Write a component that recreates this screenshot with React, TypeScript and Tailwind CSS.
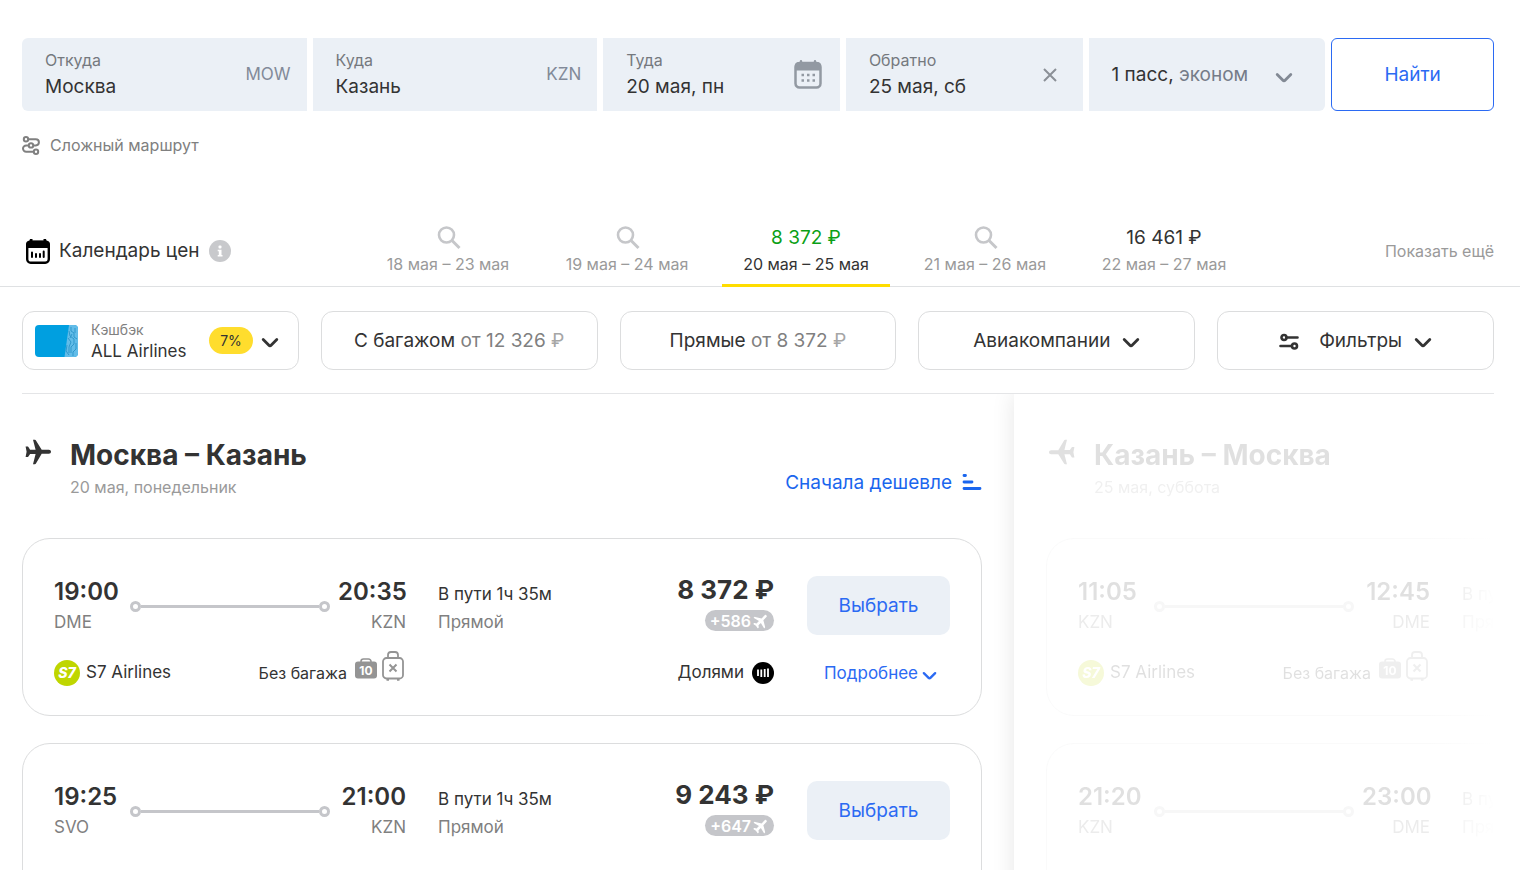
import type { ReactNode } from "react";

type Flight = {
  from: string;
  to: string;
  departure: string;
  arrival: string;
  duration: string;
  price: string;
  miles: string;
  airline?: string;
};

const calendar = [
  { dates: "18 мая – 23 мая" },
  { dates: "19 мая – 24 мая" },
  { dates: "20 мая – 25 мая", price: "8 372 ₽", active: true },
  { dates: "21 мая – 26 мая" },
  { dates: "22 мая – 27 мая", price: "16 461 ₽" },
];

const outbound: Flight[] = [
  {
    from: "DME",
    to: "KZN",
    departure: "19:00",
    arrival: "20:35",
    duration: "1ч 35м",
    price: "8 372 ₽",
    miles: "+586",
    airline: "S7 Airlines",
  },
  {
    from: "SVO",
    to: "KZN",
    departure: "19:25",
    arrival: "21:00",
    duration: "1ч 35м",
    price: "9 243 ₽",
    miles: "+647",
  },
];

const inbound: Flight[] = [
  {
    from: "KZN",
    to: "DME",
    departure: "11:05",
    arrival: "12:45",
    duration: "1ч 40м",
    price: "8 372 ₽",
    miles: "+586",
    airline: "S7 Airlines",
  },
  {
    from: "KZN",
    to: "DME",
    departure: "21:20",
    arrival: "23:00",
    duration: "1ч 40м",
    price: "9 243 ₽",
    miles: "+647",
  },
];

function Chevron({ className }: { className: string }) {
  return (
    <svg viewBox="0 0 18 12" className={className} fill="none" aria-hidden={true}>
      <path
        d="M2.2 2.6 7.9 8.3a1.5 1.5 0 0 0 2.2 0l5.7-5.7"
        stroke="currentColor"
        strokeWidth="2.8"
        strokeLinecap="round"
      />
    </svg>
  );
}

function Plane({ className }: { className: string }) {
  return (
    <svg viewBox="0 0 26 26" className={className} fill="currentColor" aria-hidden={true}>
      <path d="M8 .8h1.800c.6 0 1 .3 1.300.9l5.600 9h7.100c1.300 0 2.200.9 2.200 2s-.9 2-2.200 2h-7.100l-5.600 9.600c-.3.600-.7.900-1.300.9H8l2.600-10.100H5.100l-1.700 2.400c-.3.400-.5.500-1 .5H.6l1-5.300-1-5.300h1.800c.5 0 .7.100 1 .5l1.700 2.800h5.500z" />
    </svg>
  );
}

function CalendarIcon() {
  return (
    <svg viewBox="0 0 28 30" className="mr-0.5 h-[30px] w-7 text-[#9299a2]" fill="none" aria-hidden={true}>
      <rect x="1.500" y="3" width="25" height="24.500" rx="4" stroke="currentColor" strokeWidth="2.500" />
      <path d="M1 10.500V6a4 4 0 0 1 4-4h18a4 4 0 0 1 4 4v4.500z" fill="currentColor" />
      <path d="M7 1.200v3M21 1.200v3" stroke="currentColor" strokeWidth="2.400" strokeLinecap="round" />
      <path
        d="M7.500 15h2.500M13 15h2.500M18.500 15H21M7.500 20.500h2.500M13 20.500h2.500M18.500 20.500H21"
        stroke="currentColor"
        strokeWidth="2.500"
      />
    </svg>
  );
}

function PriceCalendarIcon() {
  return (
    <svg viewBox="0 0 24 25" className="h-[25px] w-6 shrink-0 text-black" fill="none" aria-hidden={true}>
      <rect x="1.200" y="3" width="21.600" height="20.800" rx="3.500" stroke="currentColor" strokeWidth="2.400" />
      <path d="M0 9V5.500A4 4 0 0 1 3.500 1.600L4 0h2.500v1.500h11V0H20l.5 1.600A4 4 0 0 1 24 5.500V9z" fill="currentColor" />
      <path
        d="M6 13.500v4.500M10 15v3M14 15v3M17.700 12.500v5.500"
        stroke="currentColor"
        strokeWidth="2"
        strokeLinecap="round"
      />
    </svg>
  );
}

function RouteIcon() {
  return (
    <svg viewBox="0 0 18 19" className="h-[19px] w-[18px]" fill="none" stroke="currentColor" strokeWidth="2" aria-hidden={true}>
      <circle cx="4" cy="3.200" r="2.200" />
      <circle cx="9" cy="9.400" r="2.200" />
      <circle cx="14" cy="15.800" r="2.200" />
      <path d="M6.200 3.200h7.600a3.100 3.100 0 0 1 0 6.200h-2.600M6.800 9.400H4.200a3.100 3.100 0 0 0 0 6.400h7.600" />
    </svg>
  );
}

function InfoIcon() {
  return (
    <svg viewBox="0 0 22 22" className="size-[22px]" aria-hidden={true}>
      <circle cx="11" cy="11" r="11" fill="#c8c9cc" />
      <rect x="9.500" y="5.500" width="3" height="3" rx="1" fill="white" />
      <path d="M8.700 9.800h3.800v5.200h1v1.500H8.700V15h1.100v-3.700H8.700z" fill="white" />
    </svg>
  );
}

function SearchIcon() {
  return (
    <svg viewBox="0 0 24 24" className="ml-0.5 size-6 text-[#c6c7ca]" fill="none" stroke="currentColor" aria-hidden={true}>
      <circle cx="9.500" cy="9" r="7.500" strokeWidth="2.600" />
      <path d="m15 14.500 7.500 7.500" strokeWidth="3" />
    </svg>
  );
}

function FiltersIcon() {
  return (
    <svg viewBox="0 0 20 18" className="h-[18px] w-5" fill="none" stroke="currentColor" strokeWidth="2.600" strokeLinecap="round" aria-hidden={true}>
      <circle cx="5" cy="4.500" r="2.500" />
      <path d="M7.500 4.500H18.500M1.500 13H12.500" />
      <circle cx="15.500" cy="13" r="2.500" />
    </svg>
  );
}

function SortIcon() {
  return (
    <svg viewBox="0 0 20 18" className="h-[18px] w-5" fill="none" stroke="currentColor" strokeWidth="2.800" strokeLinecap="round" aria-hidden={true}>
      <path d="M2 1.500h1.500M2 8h8M2 14.500h16" />
    </svg>
  );
}

function CabinBagIcon() {
  return (
    <svg viewBox="0 0 22 21" className="mb-2.5 h-[21px] w-[22px] text-[#949494]" fill="none" aria-hidden={true}>
      <path d="M6 5V3.500a2.500 2.500 0 0 1 2.500-2.500h5A2.500 2.500 0 0 1 16 3.500V5" stroke="currentColor" strokeWidth="1.600" />
      <rect y="3.500" width="22" height="17" rx="3" fill="currentColor" />
      <text x="11" y="16.500" textAnchor="middle" fontSize="12" fontWeight="700" fill="white">
        10
      </text>
    </svg>
  );
}

function NoLuggageIcon() {
  return (
    <svg viewBox="0 0 22 30" className="mb-3.5 h-[30px] w-[22px] text-[#949494]" fill="none" stroke="currentColor" aria-hidden={true}>
      <path d="M6 7V4a3 3 0 0 1 3-3h4a3 3 0 0 1 3 3v3" strokeWidth="1.800" />
      <rect x="1" y="7" width="20" height="20.500" rx="3.500" strokeWidth="1.800" />
      <path d="m7.500 13.500 7 7M14.500 13.500l-7 7" strokeWidth="2" />
      <path d="M4.500 28.800h2.500M15 28.800h2.500" strokeWidth="1.800" />
    </svg>
  );
}

function CashbackCard() {
  return (
    <svg viewBox="0 0 43 32" className="h-8 w-[43px] shrink-0" aria-hidden={true}>
      <rect width="43" height="32" rx="4" fill="#009fe0" />
      <path d="M34 0h5a4 4 0 0 1 4 4v24a4 4 0 0 1-4 4H29.500z" fill="#62bce8" />
      <path
        d="M36 2v4l3 2v4l3 2M34 6l1 5 4 3v5l-3 3v6M33 13l3 4-2 5v6M32 20l-1 6 3 4M40 3v5M41 18v6l-3 3v4M37 9l-2 4"
        fill="none"
        stroke="#2f97cb"
        strokeWidth="1"
      />
    </svg>
  );
}

function Field({ id, label, value, children }: { id: string; label: string; value: string; children: ReactNode }) {
  return (
    <div className="flex items-center justify-between bg-[#ebf0f6] pr-4 pl-[23px] first:rounded-l-md">
      <div className="min-w-0 flex-1">
        <label htmlFor={id} className="block text-base leading-6 text-[#75797e]">
          {label}
        </label>
        <input
          id={id}
          defaultValue={value}
          className="block h-[30px] w-full bg-transparent text-[19px] text-[#333] outline-none"
        />
      </div>
      {children}
    </div>
  );
}

function FlightCard({ flight }: { flight: Flight }) {
  return (
    <article className="min-h-[178px] rounded-[28px] border border-[#dcddde] px-[31px] pt-[37px] pb-5">
      <div className="flex items-start">
        <div className="flex w-[352px]">
          <div className="w-16">
            <p className="text-2xl leading-8 font-semibold">{flight.departure}</p>
            <p className="text-[17px] leading-7 text-[#808080]">{flight.from}</p>
          </div>
          <div className="mt-[25px] mr-2 ml-3 flex h-[11px] flex-1 items-center">
            <span className="size-[11px] rounded-full border-[3px] border-[#c5c6ca]" />
            <span className="h-[3px] flex-1 bg-[#c5c6ca]" />
            <span className="size-[11px] rounded-full border-[3px] border-[#c5c6ca]" />
          </div>
          <div className="w-[68px] text-right">
            <p className="text-2xl leading-8 font-semibold">{flight.arrival}</p>
            <p className="text-[17px] leading-7 text-[#808080]">{flight.to}</p>
          </div>
        </div>
        <div className="ml-8 pt-1 text-[17px] leading-7">
          <p>В пути {flight.duration}</p>
          <p className="text-[#808080]">Прямой</p>
        </div>
        <div className="ml-auto flex flex-col items-end">
          <p className="text-[26px] leading-7 font-bold">{flight.price}</p>
          <p className="mt-1.5 flex h-[21px] items-center gap-0.5 rounded-full bg-[#c5c6ca] px-[5px] text-base font-semibold text-white">
            {flight.miles}
            <Plane className="size-4 -rotate-45" />
          </p>
        </div>
        <button type="button" className="ml-[33px] h-[59px] w-[143px] rounded-[10px] bg-[#ebf0f6] pt-0.5 text-[19px] text-[#2b6af3]">
          Выбрать
        </button>
      </div>
      {flight.airline && (
        <div className="mt-[15px] flex items-center">
          <div className="flex w-[352px] items-center justify-between">
            <div className="flex items-center gap-1.5 text-[17px]">
              <span className="flex size-[26px] items-center justify-center rounded-full bg-[#bfd600] text-sm font-extrabold text-white italic">
                S7
              </span>
              {flight.airline}
            </div>
            <div className="flex items-center text-base">
              Без багажа
              <span className="ml-2 flex items-center gap-[5px] pr-0.5">
                <CabinBagIcon />
                <NoLuggageIcon />
              </span>
            </div>
          </div>
          <div className="ml-auto flex items-center gap-2 text-[17px]">
            Долями
            <svg viewBox="0 0 22 22" className="size-[22px]" aria-hidden={true}>
              <circle cx="11" cy="11" r="11" fill="black" />
              <path d="M6 7.500v6.500M9.300 7.500V15M12.700 7v8M16 6.500V15" stroke="white" strokeWidth="1.800" />
            </svg>
          </div>
          <button
            type="button"
            className="ml-[33px] flex w-[143px] items-center justify-center gap-1 pt-0.5 pl-1 text-[17px] text-[#2b6af3]"
          >
            Подробнее
            <Chevron className="mt-1 h-[10px] w-[15px]" />
          </button>
        </div>
      )}
    </article>
  );
}

function Direction({ title, date, back, children }: { title: string; date: string; back?: boolean; children?: ReactNode }) {
  return (
    <header className="flex h-36 items-start pt-[43px]">
      <Plane className={back ? "mx-[3px] mt-0.5 size-[26px] rotate-180" : "mx-[3px] mt-0.5 size-[26px]"} />
      <div className="ml-4">
        <h2 className="text-[28px] leading-9 font-bold">{title}</h2>
        <p className="text-base leading-7 text-[#9a9a9a]">{date}</p>
      </div>
      {children}
    </header>
  );
}

const filterClass =
  "flex h-[59px] items-center justify-center rounded-xl border border-[#dcddde] pt-0.5 text-[19px] whitespace-nowrap";

export default function App() {
  return (
    <div className="min-h-screen overflow-hidden bg-white font-['Inter',sans-serif] text-[#333]">
      <form className="grid grid-cols-[285fr_285fr_237fr_237fr_237fr_163fr] gap-1.5 pt-[38px] pr-[26px] pl-[22px]">
        <Field id="from" label="Откуда" value="Москва">
          <span className="text-[17px] text-[#828a99]">MOW</span>
        </Field>
        <Field id="to" label="Куда" value="Казань">
          <span className="text-[17px] text-[#828a99]">KZN</span>
        </Field>
        <Field id="there" label="Туда" value="20 мая, пн">
          <CalendarIcon />
        </Field>
        <Field id="back" label="Обратно" value="25 мая, сб">
          <button type="button" aria-label="Очистить" className="mr-0.5 p-2 text-[#8b9097]">
            <svg viewBox="0 0 14 14" className="size-3.5" stroke="currentColor" strokeWidth="2" aria-hidden={true}>
              <path d="m1 1 12 12M13 1 1 13" />
            </svg>
          </button>
        </Field>
        <button type="button" className="flex items-center justify-between rounded-r-md bg-[#ebf0f6] pt-0.5 pr-8 pl-[23px] text-[19px]">
          <span>
            1 пасс, <span className="text-[#757c88]">эконом</span>
          </span>
          <Chevron className="mt-1 h-3 w-[18px] text-[#828994]" />
        </button>
        <button type="submit" className="h-[73px] rounded-md border border-[#2b6af3] pt-0.5 text-[19px] text-[#2b6af3]">
          Найти
        </button>
      </form>
      <button type="button" className="mt-5 ml-[22px] flex items-center gap-2.5 text-base leading-7 text-[#808080]">
        <RouteIcon />
        Сложный маршрут
      </button>

      <section className="mt-[57px] flex h-[71px] justify-between border-b border-[#dfe1e3] pr-[26px] pl-[26px]">
        <div className="flex w-[338px] items-center gap-[9px] text-[19px]">
          <PriceCalendarIcon />
          Календарь цен
          <InfoIcon />
        </div>
        <div className="flex flex-1 gap-[11px]">
          {calendar.map((item) => (
            <button
              key={item.dates}
              type="button"
              className={
                item.active
                  ? "-mb-px flex w-[168px] flex-col items-center border-b-3 border-[#ffdd00] pt-2"
                  : "flex w-[168px] flex-col items-center pt-2 text-[#9a9a9a]"
              }
            >
              <span
                className={
                  item.active
                    ? "flex h-7 items-center text-[19px] text-[#0b9f16]"
                    : "flex h-7 items-center text-[19px] text-[#333]"
                }
              >
                {item.price ?? <SearchIcon />}
              </span>
              <span className="text-base leading-6">{item.dates}</span>
            </button>
          ))}
        </div>
        <button type="button" className="text-base text-[#9a9a9a]">
          Показать ещё
        </button>
      </section>

      <main className="pr-[26px] pl-[22px]">
        <div className="grid grid-cols-5 gap-[22px] border-b border-[#e4e5e7] pt-6 pb-[23px]">
          <button type="button" className="flex h-[59px] items-center rounded-xl border border-[#dcddde] px-3 text-left">
            <CashbackCard />
            <span className="ml-[13px]">
              <span className="block text-sm leading-5 text-[#808080]">Кэшбэк</span>
              <span className="block text-[17px] leading-[22px]">ALL Airlines</span>
            </span>
            <span className="ml-auto rounded-full bg-[#ffdd2d] px-[11px] text-sm leading-[27px]">7%</span>
            <Chevron className="mt-1 mr-[7px] ml-2 h-3 w-[18px]" />
          </button>
          <button type="button" className={filterClass}>
            <span>
              С багажом <span className="text-[#808080]">от 12 326 <span className="text-[#a6a6a6]">₽</span></span>
            </span>
          </button>
          <button type="button" className={filterClass}>
            <span>
              Прямые <span className="text-[#808080]">от 8 372 <span className="text-[#a6a6a6]">₽</span></span>
            </span>
          </button>
          <button type="button" className={filterClass}>
            Авиакомпании
            <Chevron className="mt-0.5 ml-3 h-3 w-[18px]" />
          </button>
          <button type="button" className={filterClass}>
            <FiltersIcon />
            <span className="ml-5">Фильтры</span>
            <Chevron className="mt-0.5 ml-3 h-3 w-[18px]" />
          </button>
        </div>

        <div className="grid grid-cols-[992fr_480fr] overflow-hidden">
          <section className="min-w-0 pr-8">
            <Direction title="Москва – Казань" date="20 мая, понедельник">
              <button type="button" className="mt-8 ml-auto flex items-center gap-2.5 text-[19px] text-[#1a66ee]">
                Сначала дешевле
                <SortIcon />
              </button>
            </Direction>
            <div className="space-y-[27px] pb-8">
              {outbound.map((flight) => (
                <FlightCard key={flight.departure} flight={flight} />
              ))}
            </div>
          </section>
          <section className="min-w-0 shadow-[0_0_22px_rgba(0,0,0,0.1)]">
            <div className="mask-r-from-86% pl-8">
              <div className="w-[960px] opacity-15">
                <Direction title="Казань – Москва" date="25 мая, суббота" back />
                <div className="space-y-[27px]">
                  {inbound.map((flight) => (
                    <FlightCard key={flight.departure} flight={flight} />
                  ))}
                </div>
              </div>
            </div>
          </section>
        </div>
      </main>
    </div>
  );
}
